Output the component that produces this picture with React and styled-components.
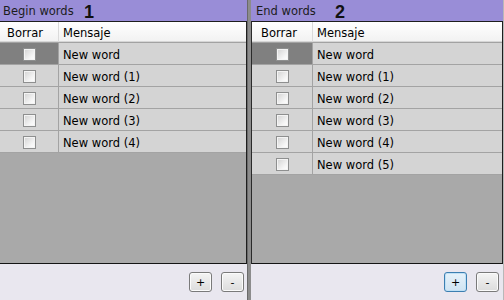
import React from 'react';
import styled, { createGlobalStyle } from 'styled-components';

const GlobalStyle = createGlobalStyle`
  html, body {
    margin: 0;
    padding: 0;
  }
  body {
    font-family: 'DejaVu Sans', Verdana, sans-serif;
    font-size: 11.5px;
    color: #000;
  }
`;

const Window = styled.div`
  display: flex;
  width: 504px;
  height: 300px;
  padding-right: 1px;
  box-sizing: border-box;
  background: #b8b8b8;
  overflow: hidden;
`;

const Panel = styled.div`
  display: flex;
  flex-direction: column;
  width: ${({ width }) => width}px;
  flex: ${({ grow }) => (grow ? 1 : 'none')};
`;

const Splitter = styled.div`
  width: 4px;
  background: #8c8c8c;
  border-left: 1px solid #6a6a6a;
  box-sizing: border-box;
`;

const TitleBar = styled.div`
  position: relative;
  height: 21px;
  display: flex;
  align-items: center;
  padding-left: ${({ inset }) => inset}px;
  background: #998dd7;
  color: #1c1c1c;
`;

const Marker = styled.span`
  position: absolute;
  left: 84px;
  top: 2px;
  font-family: 'Liberation Sans', Arial, sans-serif;
  font-weight: bold;
  font-size: 18px;
  color: #111;
`;

const Grid = styled.div`
  flex: 1;
  display: flex;
  flex-direction: column;
  background: #a9a9a9;
  border-top: 1px solid #1e1e1e;
  border-bottom: 1px solid #141414;
  border-left: ${({ edgeLeft }) => (edgeLeft ? '1px solid #2a2a2a' : 'none')};
  border-right: 1px solid #1e1e1e;
`;

const HeaderRow = styled.div`
  display: flex;
  height: 21px;
  box-sizing: border-box;
  background: linear-gradient(#ffffff, #f1f1f1);
  border-bottom: 1px solid #a2a2a2;
  box-shadow: inset 0 -1px 0 #d6d6d6;
`;

const HeaderCell = styled.div`
  display: flex;
  align-items: center;
  width: ${({ width }) => (width ? `${width}px` : 'auto')};
  flex: ${({ width }) => (width ? 'none' : 1)};
  padding-left: ${({ pad }) => pad}px;
  padding-top: 1px;
  box-sizing: border-box;
  border-right: ${({ width }) => (width ? '1px solid #dadada' : 'none')};
`;

const Row = styled.div`
  display: flex;
  height: 22px;
  box-sizing: border-box;
  background: #d4d4d4;
  border-bottom: 1px solid #a3a3a3;
`;

const CheckCell = styled.div`
  display: flex;
  align-items: center;
  justify-content: center;
  width: ${({ width }) => width}px;
  padding-top: 1px;
  box-sizing: border-box;
  border-right: 1px solid #a3a3a3;
  background: ${({ selected }) => (selected ? '#808080' : 'transparent')};
`;

const TextCell = styled.div`
  flex: 1;
  display: flex;
  align-items: center;
  padding-left: 4px;
  padding-top: 2px;
`;

const Check = styled.span`
  display: block;
  width: 13px;
  height: 13px;
  box-sizing: border-box;
  border: 1px solid #8e8f8f;
  background: linear-gradient(135deg, #d2d2d2, #f6f6f6 70%, #ffffff);
  box-shadow: inset 0 0 0 1px #f4f4f4;
`;

const BottomBar = styled.div`
  height: 36px;
  display: flex;
  align-items: center;
  justify-content: flex-end;
  gap: 9px;
  padding-right: ${({ inset }) => inset}px;
  background: #e9e7ef;
`;

const Button = styled.button`
  width: 23px;
  height: 20px;
  padding: 0;
  margin: 0;
  font-family: 'DejaVu Sans', Verdana, sans-serif;
  font-size: 11px;
  color: #000;
  border: 1px solid ${({ focused }) => (focused ? '#3c7fb1' : '#7a7a7a')};
  border-radius: 3px;
  background: ${({ focused }) =>
    focused ? 'linear-gradient(#e6f2fa, #cfe4f3)' : 'linear-gradient(#f4f4f4, #dcdcdc)'};
  box-shadow: inset 0 0 0 1px ${({ focused }) => (focused ? '#bfe0f5' : '#fbfbfb')};
`;

const WordsPanel = ({ title, marker, words, width, grow, titleInset, colWidth, headPad, edgeLeft, barInset, focusAdd }) => (
  <Panel width={width} grow={grow}>
    <TitleBar inset={titleInset}>
      {title}
      <Marker>{marker}</Marker>
    </TitleBar>
    <Grid edgeLeft={edgeLeft}>
      <HeaderRow>
        <HeaderCell width={colWidth} pad={headPad}>Borrar</HeaderCell>
        <HeaderCell pad={4}>Mensaje</HeaderCell>
      </HeaderRow>
      {words.map((w, i) => (
        <Row key={w}>
          <CheckCell width={colWidth} selected={i === 0}>
            <Check />
          </CheckCell>
          <TextCell>{w}</TextCell>
        </Row>
      ))}
    </Grid>
    <BottomBar inset={barInset}>
      <Button focused={focusAdd}>+</Button>
      <Button>-</Button>
    </BottomBar>
  </Panel>
);

const beginWords = ['New word', 'New word (1)', 'New word (2)', 'New word (3)', 'New word (4)'];
const endWords = [...beginWords, 'New word (5)'];

export default function App() {
  return (
    <>
      <GlobalStyle />
      <Window>
        <WordsPanel
          title="Begin words"
          marker="1"
          words={beginWords}
          width={247}
          titleInset={3}
          colWidth={59}
          headPad={7}
          barInset={3}
        />
        <Splitter />
        <WordsPanel
          title="End words"
          marker="2"
          words={endWords}
          grow
          edgeLeft
          titleInset={5}
          colWidth={61}
          headPad={9}
          barInset={4}
          focusAdd
        />
      </Window>
    </>
  );
}
